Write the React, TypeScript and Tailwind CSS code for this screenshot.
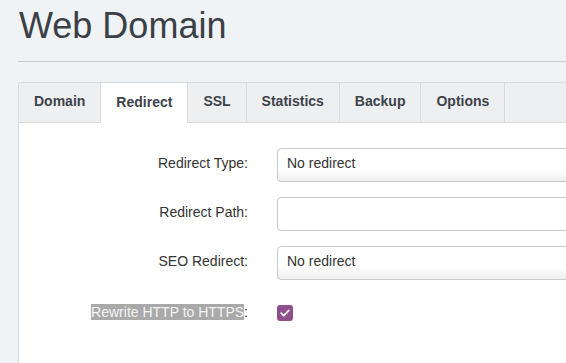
const font = { fontFamily: '"Liberation Sans", Arial, sans-serif' };

const tabs = ["Domain", "Redirect", "SSL", "Statistics", "Backup", "Options"];

function Tabs() {
  return (
    <div className="flex h-[40px] bg-[#eeeff1] border-b border-[#d9dadb] rounded-tl-[3px]">
      {tabs.map((t) => (
        <div
          key={t}
          className={
            "flex items-center pb-[2px] px-[15px] border-r border-[#d9dadb] text-[14px] font-bold text-[#3d434a] " +
            (t === "Redirect" ? "bg-white -mb-px h-[40px]" : "")
          }
        >
          {t}
        </div>
      ))}
    </div>
  );
}

function SelectBox({ value }: { value: string }) {
  return (
    <div className="h-[34px] w-[400px] flex items-center pl-[9px] pb-[3px] border border-[#c9c9c9] rounded-[4px] bg-gradient-to-b from-white from-60% to-[#efefef] text-[14px] text-[#333]">
      {value}
    </div>
  );
}

function TextBox() {
  return <div className="h-[34px] w-[400px] border border-[#c9c9c9] rounded-[4px] bg-white" />;
}

export default function App() {
  return (
    <div className="w-full h-[363px] overflow-hidden bg-[#eff3f6] pl-[18px]" style={font}>
      <h1 className="mt-[5px] ml-px text-[36px] leading-[41px] text-[#3b4046]">Web Domain</h1>
      <div className="mt-[15px] border-t border-[#c8cacc]" />
      <div className="mt-[20px] bg-white border-l border-t border-[#d9dadb] rounded-tl-[3px] h-[300px]">
        <Tabs />
        <div className="grid grid-cols-[229px_1fr] gap-x-[29px] gap-y-[15px] pt-[25px] items-center text-[14px] text-[#333]">
          <div className="text-right pb-[4px]">Redirect Type:</div>
          <SelectBox value="No redirect" />
          <div className="text-right pb-[4px]">Redirect Path:</div>
          <TextBox />
          <div className="text-right pb-[4px]">SEO Redirect:</div>
          <SelectBox value="No redirect" />
          <div className="text-right mt-px pb-[2px]">
            <span className="bg-[#a9a9a9] text-[#f4f4f4]">Rewrite HTTP to HTTPS</span>:
          </div>
          <div className="h-[34px] flex items-center mt-px">
            <div className="w-4 h-4 rounded-[3px] bg-[#8f4f8d] flex items-center justify-center">
              <svg width="10" height="8" viewBox="0 0 10 8" fill="none">
                <path d="M1.2 4.2 L3.8 6.6 L8.8 1.4" stroke="white" strokeWidth="1.8" strokeLinecap="round" strokeLinejoin="round" />
              </svg>
            </div>
          </div>
        </div>
      </div>
    </div>
  );
}
